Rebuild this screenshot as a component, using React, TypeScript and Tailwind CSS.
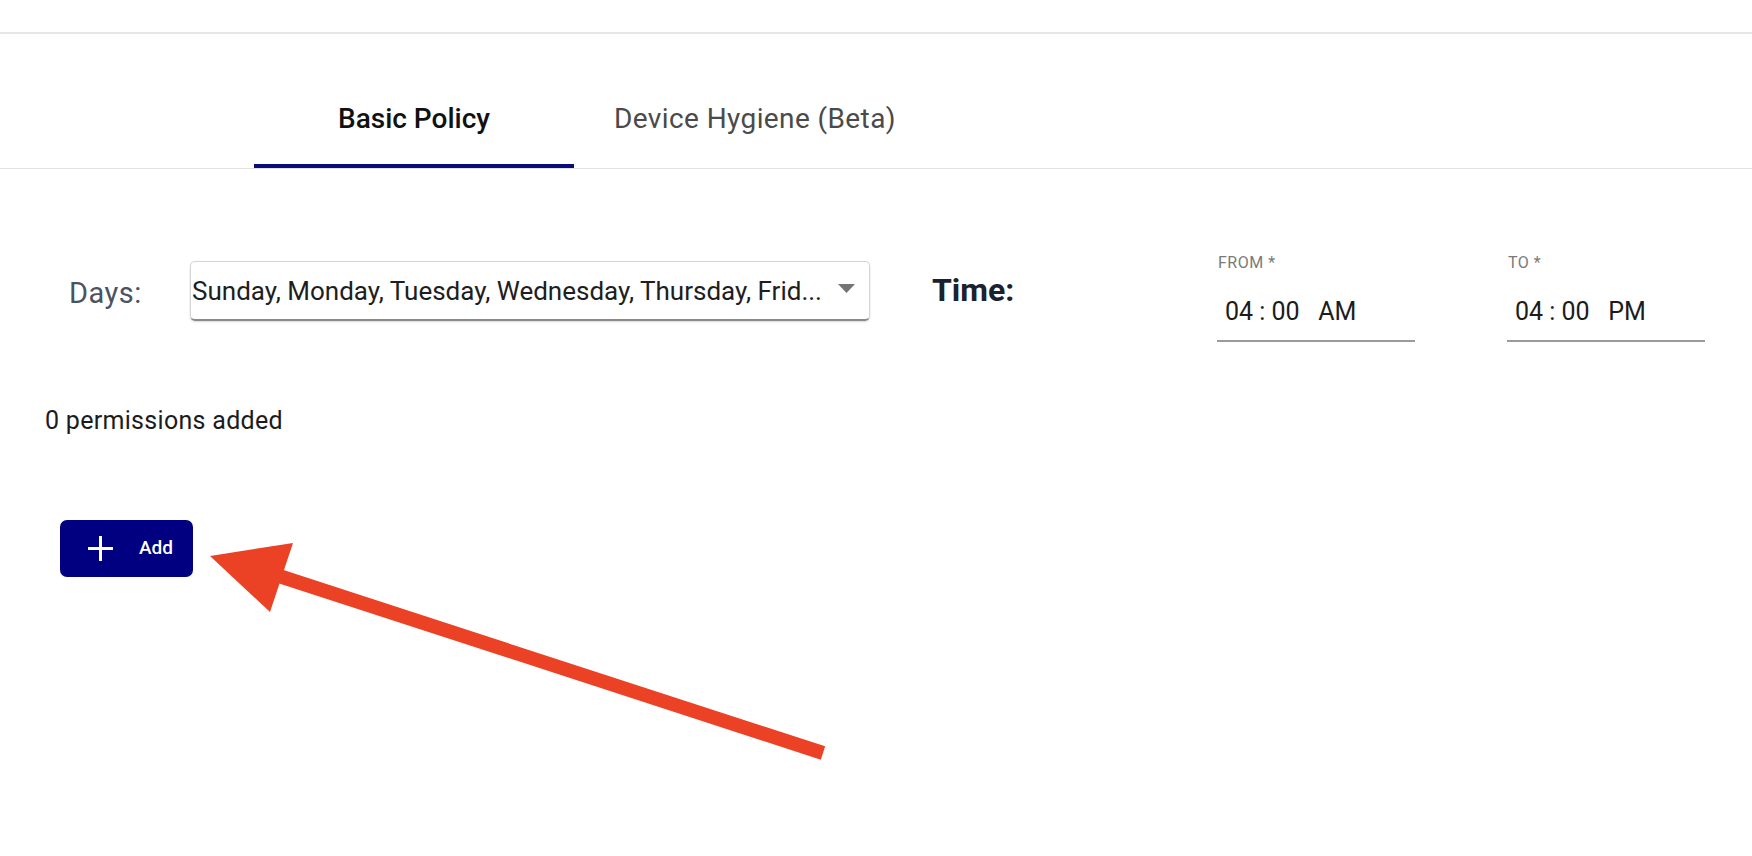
import React from 'react';

const font = 'font-[Roboto,"Liberation_Sans",sans-serif]';

const TimeField = ({label, value}: {label: string; value: string}) => {
  return (
    <div className="flex w-[198px] flex-col">
      <span className="h-[20px] pl-[1px] text-[16px] leading-[20px] tracking-[0.5px] text-[#7a7a7a]">{label}</span>
      <span className="mt-[24px] h-[30px] pl-[8px] text-[25px] leading-[30px] whitespace-pre text-[#1c1c1c]">{value}</span>
      <div className="mt-[13px] h-[2px] w-full bg-[#9a9a9a]" />
    </div>
  );
};

export default function App() {
  return (
    <main className={`relative min-h-screen w-full overflow-hidden bg-white ${font}`}>
      {/* header strip */}
      <div className="h-[34px] border-b-2 border-[#e6e6e6]" />

      {/* tabs */}
      <div className="flex h-[135px] border-b border-[#e2e2e2] pl-[254px]">
        <button className="relative flex h-full w-[320px] items-end justify-center pb-[31px]">
          <span className="text-[28px] leading-[36px] font-medium text-[#111]">Basic Policy</span>
          <span className="absolute bottom-0 left-0 h-[4px] w-full bg-[#0b0b7a]" />
        </button>
        <button className="flex h-full items-end px-[40px] pb-[31px]">
          <span className="text-[28px] leading-[36px] tracking-[0.4px] text-[#4a4a4a]">Device Hygiene (Beta)</span>
        </button>
      </div>

      {/* days / time row */}
      <div className="mt-[84px] flex items-start pl-[69px]">
        <span className="mt-[22px] w-[121px] text-[29px] leading-[36px] tracking-[0.5px] text-[#4b5261]">Days:</span>
        <div className="mt-[8px] flex h-[60px] w-[680px] items-center justify-between rounded-[5px] border border-[#d4d4d4] border-b-2 border-b-[#8a8a8a] pr-[14px] pl-[1px] shadow-[0_1px_2px_rgba(0,0,0,0.15)]">
          <span className="text-[26px] leading-[30px] text-[#1e1e1e]">
            Sunday, Monday, Tuesday, Wednesday, Thursday, Frid...
          </span>
          <svg width="17" height="9" viewBox="0 0 17 9" className="mb-[4px]">
            <path d="M0 0 L17 0 L8.5 9 Z" fill="#757575" />
          </svg>
        </div>
        <span className="mt-[19px] ml-[62px] w-[285px] text-[32px] leading-[36px] font-bold text-[#1a222e]">Time:</span>
        <TimeField label="FROM *" value="04 : 00   AM" />
        <div className="w-[92px]" />
        <TimeField label="TO *" value="04 : 00   PM" />
      </div>

      <p className="mt-[64px] pl-[45px] text-[25px] leading-[30px] tracking-[0.3px] text-[#1c1c1c]">0 permissions added</p>

      <button className="mt-[84px] ml-[60px] flex h-[57px] w-[133px] items-center rounded-[7px] bg-[#000080] pl-[27px]">
        <svg width="27" height="27" viewBox="0 0 27 27">
          <path d="M13.5 1 V26 M1 13.5 H26" stroke="white" strokeWidth="3" />
        </svg>
        <span className="ml-[25px] text-[19px] font-medium text-white">Add</span>
      </button>

      {/* annotation arrow */}
      <svg className="pointer-events-none absolute top-0 left-0" width="1752" height="856">
        <line x1="276" y1="575" x2="823" y2="753" stroke="#eb4226" strokeWidth="14" />
        <polygon points="210,556 293,543 270,612" fill="#eb4226" />
      </svg>
    </main>
  );
}
